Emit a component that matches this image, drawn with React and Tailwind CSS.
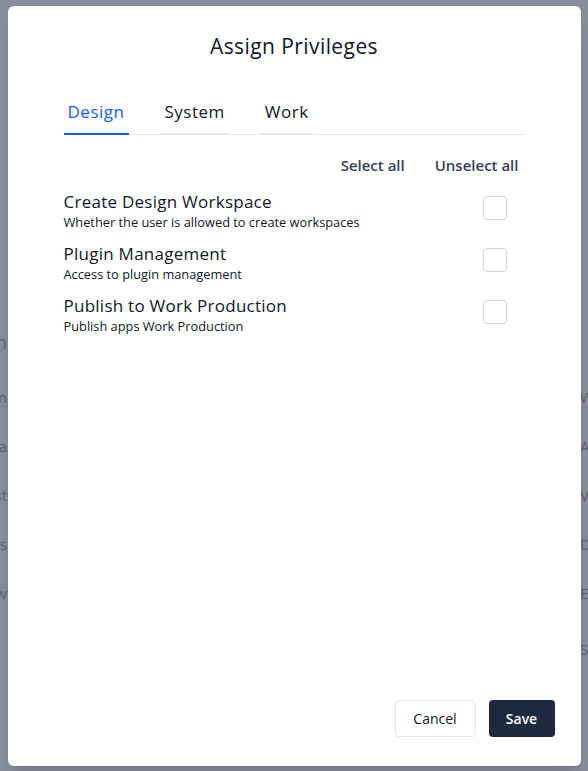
import React, { useState } from "react";

const privileges = [
  {
    name: "Create Design Workspace",
    description: "Whether the user is allowed to create workspaces",
  },
  { name: "Plugin Management", description: "Access to plugin management" },
  { name: "Publish to Work Production", description: "Publish apps Work Production" },
];

const tabs = ["Design", "System", "Work"];

// faint page rows behind the overlay
const pageRows = [
  { left: "Item", right: "Work" },
  { left: "Data", right: "Access" },
  { left: "Last", right: "View" },
  { left: "Users", right: "Data" },
  { left: "New", right: "Edit" },
];

const App = () => {
  const [activeTab, setActiveTab] = useState("Design");
  const [checked, setChecked] = useState([false, false, false]);

  const toggle = (i) => setChecked((c) => c.map((v, j) => (j === i ? !v : v)));

  return (
    <div
      className="relative h-[771px] w-full overflow-hidden bg-white"
      style={{ fontFamily: '"Open Sans", "Noto Sans", sans-serif' }}
    >
      {/* Page behind the dialog */}
      <div className="pt-[324px] text-[15px] text-gray-900">
        <div className="flex h-[36px] items-center justify-between">
          <div className="flex w-[7px] justify-end whitespace-nowrap text-[18px]">Program</div>
          <div className="w-[8px] whitespace-nowrap" />
        </div>
        <div className="h-[13px] " />
        {pageRows.map((r) => (
          <div key={r.left} className="flex h-[49px] items-center justify-between border-b border-gray-200">
            <div className="flex w-[7px] justify-end whitespace-nowrap">{r.left}</div>
            <div className="w-[8px] whitespace-nowrap">{r.right}</div>
          </div>
        ))}
        <div className="flex h-[13px] border-b border-gray-200" />
        <div className="flex h-[37px] items-center justify-end border-b border-gray-200">
          <div className="w-[8px] whitespace-nowrap">Save</div>
        </div>
      </div>

      {/* Overlay */}
      <div className="absolute inset-0 flex items-center justify-center bg-gray-500/80">
        <div className="flex h-[760px] w-[573px] flex-col rounded-md bg-white shadow-xl">
          <h2 className="pt-[26px] text-center text-[21px] leading-[28px] tracking-[0.02em] text-gray-900">
            Assign Privileges
          </h2>

          <div className="mt-[40px] px-[56px]">
            <div className="flex gap-8 border-b border-gray-200">
              {tabs.map((t) => (
                <button
                  key={t}
                  onClick={() => setActiveTab(t)}
                  className={
                    activeTab === t
                      ? "-mb-px border-b-2 border-blue-600 px-1 pb-[9px] text-[17px] leading-[24px] font-medium tracking-[0.03em] text-blue-600"
                      : "-mb-px border-b-2 border-gray-200 px-1 pb-[9px] text-[17px] leading-[24px] font-medium tracking-[0.03em] text-gray-900"
                  }
                >
                  {t}
                </button>
              ))}
            </div>

            <div className="mt-[20px] flex justify-end gap-[30px] pr-[6px] text-[15px] leading-[20px] font-semibold text-gray-700">
              <button>Select all</button>
              <button>Unselect all</button>
            </div>

            <div className="mt-[16px] flex flex-col gap-[12px]">
              {privileges.map((p, i) => (
                <div key={p.name} className="flex items-start justify-between">
                  <div>
                    <div className="text-[17px] leading-[22px] tracking-[0.015em] text-gray-900">{p.name}</div>
                    <div className="text-[12.8px] leading-[18px] text-gray-900">{p.description}</div>
                  </div>
                  <button
                    onClick={() => toggle(i)}
                    className={
                      checked[i]
                        ? "mt-[5px] mr-[18px] h-6 w-6 rounded border border-slate-800 bg-slate-800"
                        : "mt-[5px] mr-[18px] h-6 w-6 rounded border border-gray-300 bg-white"
                    }
                  />
                </div>
              ))}
            </div>
          </div>

          <div className="mt-auto flex justify-end gap-[13px] pr-[26px] pb-[29px]">
            <button className="h-[37px] w-[81px] rounded border border-gray-200 bg-white text-[14px] font-medium text-gray-900">
              Cancel
            </button>
            <button className="h-[37px] w-[66px] rounded bg-slate-800 text-[14px] font-semibold text-white">
              Save
            </button>
          </div>
        </div>
      </div>
    </div>
  );
};

export default App;
